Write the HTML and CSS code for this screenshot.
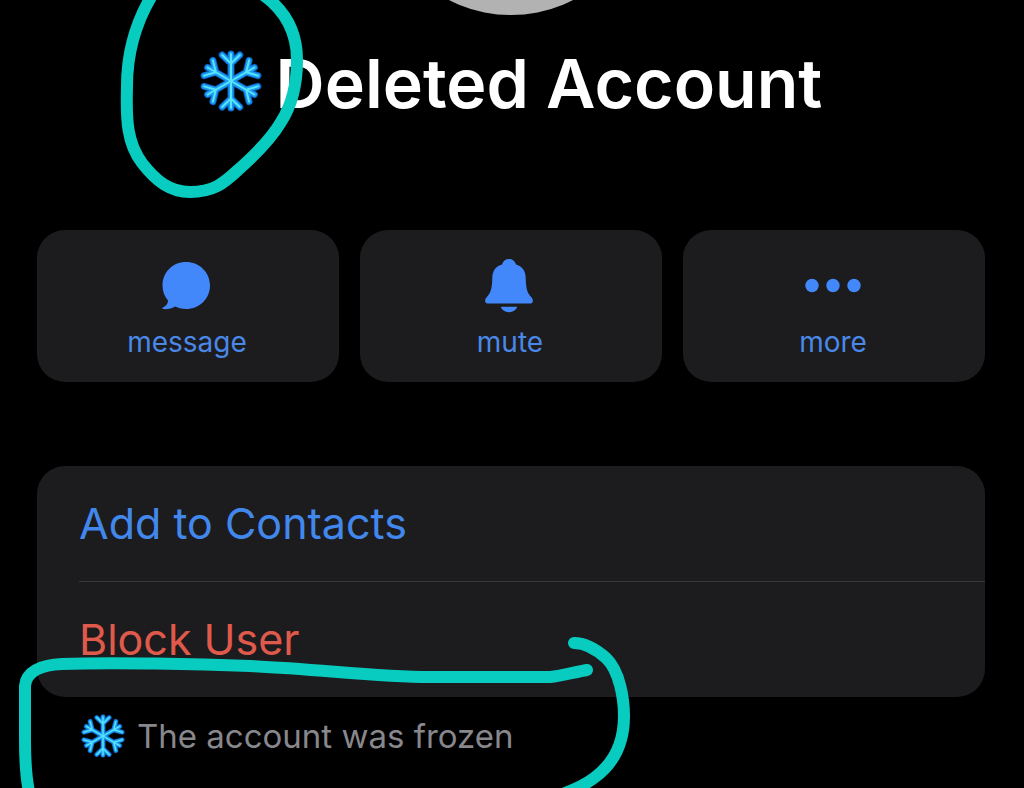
FILE: index.html
```html
<!DOCTYPE html>
<html lang="en">
<head>
<meta charset="utf-8">
<meta name="viewport" content="width=device-width, initial-scale=1">
<title>Deleted Account</title>
<link rel="stylesheet" href="styles.css">
</head>
<body>
<svg class="symbols" width="0" height="0" aria-hidden="true">
  <defs>
    <g id="branch">
      <path d="M0 0V-27M0 -17.500L-8.800 -26M0 -17.500L8.800 -26"/>
    </g>
    <g id="arms">
      <use href="#branch"/>
      <use href="#branch" transform="rotate(60)"/>
      <use href="#branch" transform="rotate(120)"/>
      <use href="#branch" transform="rotate(180)"/>
      <use href="#branch" transform="rotate(240)"/>
      <use href="#branch" transform="rotate(300)"/>
    </g>
    <symbol id="snowflake" viewBox="-31 -31 62 62">
      <use href="#arms" class="flake-edge"/>
      <use href="#arms" class="flake-mid"/>
      <use href="#arms" class="flake-core"/>
    </symbol>
  </defs>
</svg>
<main class="profile">
  <header class="header">
    <div class="avatar"></div>
    <h1 class="name"><svg class="flake flake-large" aria-hidden="true"><use href="#snowflake"/></svg><span>Deleted Account</span></h1>
  </header>
  <div class="actions">
    <button class="action" type="button">
      <svg class="action-icon" viewBox="0 0 56 56" aria-hidden="true"><path d="M27 4C40.500 4 51 14.500 51 27.500S40.500 51 27 51C22.500 51 19 50 16.500 48.500C13 50.500 8 51.500 4 51C3 50.800 3 50 4 49.500C7.500 47.500 9 45.500 9 42.500C5.500 38.500 3.500 33.500 3.500 27.500C3.500 14.500 13.500 4 27 4Z"/></svg>
      <span>message</span>
    </button>
    <button class="action" type="button">
      <svg class="action-icon" viewBox="0 0 56 56" aria-hidden="true"><path d="M27 1C30.500 1 33 3 34 6.500C40 8 43.500 12.500 43.700 19.500C44 32 45.500 35 49.500 39.500C51.500 41.500 51.500 45.500 48.500 45.500H5.500C2.500 45.500 2.500 41.500 4.500 39.500C8.500 35 10 32 10.300 19.500C10.500 12.500 14 8 20 6.500C21 3 23.500 1 27 1ZM19.500 48.800H34.500C35.500 48.800 35 50.300 33.500 51.500C30 55 24 55 20.500 51.500C19 50.300 18.500 48.800 19.500 48.800Z"/></svg>
      <span>mute</span>
    </button>
    <button class="action" type="button">
      <svg class="action-icon" viewBox="0 0 56 56" aria-hidden="true"><circle cx="7" cy="27.500" r="6.700"/><circle cx="28" cy="27.500" r="6.700"/><circle cx="49" cy="27.500" r="6.700"/></svg>
      <span>more</span>
    </button>
  </div>
  <div class="card">
    <button class="row" type="button">Add to Contacts</button>
    <button class="row row-danger" type="button">Block User</button>
  </div>
  <p class="note"><svg class="flake flake-small" aria-hidden="true"><use href="#snowflake"/></svg><span>The account was frozen</span></p>
</main>
<svg class="markup" width="1024" height="788" viewBox="0 0 1024 788" aria-hidden="true">
  <path d="M154 -8C134 24 127 55 127 86C126 120 127 143 142 163C156 181 170 192 190 192C213 192 223 184 238 170C255 155 271 139 281 122C292 105 297 85 297 60C297 36 288 12 262 -6"/>
  <path d="M30 796C26 780 25 765 25 740V686C26 672 40 665 62 664C110 662 200 664 250 666C320 669 375 677 430 677H550C562 676 575 672 587 670"/>
  <path d="M574 643C587 643 597 650 606 658C620 671 624 700 624 716C624 745 612 765 594 778C586 784 578 788 565 793"/>
</svg>
</body>
</html>
```
FILE: styles.css
```css
* {
  box-sizing: border-box;
}

body {
  position: relative;
  min-height: 100vh;
  margin: 0;
  overflow-x: hidden;
  background: #000;
  color: #fff;
  font-family: Inter, "Liberation Sans", sans-serif;
}

button {
  border: 0;
  font: inherit;
  cursor: pointer;
}

.symbols {
  position: absolute;
}

.profile {
  padding: 0 39px 0 37px;
  overflow: hidden;
}

.header {
  display: flex;
  flex-direction: column;
  align-items: center;
}

.avatar {
  width: 272px;
  height: 272px;
  margin-top: -257px;
  border-radius: 50%;
  background: #b2b2b2;
}

.name {
  display: flex;
  align-items: center;
  gap: 14px;
  margin: 20px 0 0;
  font-size: 68px;
  line-height: 88px;
  font-weight: 600;
  white-space: nowrap;
}

.name span {
  padding-top: 4px;
}

.flake {
  flex: none;
  fill: none;
  stroke-linecap: round;
}

.flake-large {
  width: 62px;
  height: 62px;
}

.flake-small {
  width: 44px;
  height: 44px;
}

.flake-edge {
  stroke: #0a5ec0;
  stroke-width: 7px;
}

.flake-mid {
  stroke: #1c9cf0;
  stroke-width: 5px;
}

.flake-core {
  stroke: #58e4fb;
  stroke-width: 2px;
}

.actions {
  display: grid;
  grid-template-columns: repeat(3, 1fr);
  gap: 21px;
  margin-top: 103px;
}

.action {
  display: flex;
  flex-direction: column;
  align-items: center;
  gap: 10px;
  padding: 28px 2px 22px 0;
  border-radius: 28px;
  background: #1c1c1e;
  color: #4a88e8;
  font-size: 28px;
  line-height: 36px;
}

.action-icon {
  width: 56px;
  height: 56px;
  fill: #4288fa;
}

.card {
  margin-top: 84px;
  border-radius: 28px;
  background: #1c1c1e;
  overflow: hidden;
}

.row {
  display: block;
  width: calc(100% - 42px);
  margin-left: 42px;
  padding: 0;
  background: none;
  color: #4288ec;
  font-size: 43px;
  line-height: 115px;
  text-align: left;
}

.row-danger {
  border-top: 1px solid #38383a;
  color: #e05a4c;
}

.note {
  display: flex;
  align-items: center;
  gap: 12px;
  margin: 16px 0 0 44px;
  padding-bottom: 29px;
  color: #87878c;
  font-size: 33px;
  line-height: 46px;
}

.markup {
  position: absolute;
  top: 0;
  left: 0;
  fill: none;
  stroke: #08ccbf;
  stroke-width: 12px;
  stroke-linecap: round;
  stroke-linejoin: round;
  pointer-events: none;
}
```
